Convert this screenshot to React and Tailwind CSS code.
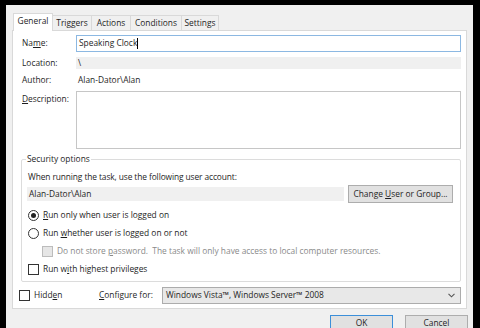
import React from "react";

const tabs = [
  { label: "General", w: "w-[40px]", active: true },
  { label: "Triggers", w: "w-[40px]" },
  { label: "Actions", w: "w-[40px]" },
  { label: "Conditions", w: "w-[52px]" },
  { label: "Settings", w: "w-[38px]" },
];

function Radio({ checked, children }) {
  return (
    <div className="flex items-center h-[18px]">
      <div className="w-[11px] h-[11px] rounded-full border border-[#333] bg-white flex items-center justify-center">
        {checked && <div className="w-[5px] h-[5px] rounded-full bg-[#222]" />}
      </div>
      <span className="ml-[4px]">{children}</span>
    </div>
  );
}

function Check({ disabled, children }) {
  return (
    <div className="flex items-center h-[18px]">
      <div
        className={
          disabled
            ? "w-[11px] h-[11px] border border-[#bcbcbc] bg-[#e6e6e6]"
            : "w-[11px] h-[11px] border border-[#333] bg-white"
        }
      />
      <span className={disabled ? "ml-[4px] text-[#8a8a8a]" : "ml-[4px]"}>{children}</span>
    </div>
  );
}

export default function App() {
  return (
    <div
      className="w-[480px] h-[328px] bg-black pt-[5px] pl-[6px] overflow-hidden text-[8.4px] text-[#1e1e1e] leading-none"
      style={{ fontFamily: '"Open Sans", "Noto Sans", sans-serif' }}
    >
      <div className="w-[467px] h-[330px] bg-[#f0f0f0] pt-[8px] pl-[6px]">
        {/* Tabs */}
        <div className="flex items-end h-[17px] ml-[1px]">
          {tabs.map((t) =>
            t.active ? (
              <div
                key={t.label}
                className={`${t.w} h-[18px] -mb-[1px] relative z-10 bg-white border border-b-0 border-[#d9d9d9] flex items-center justify-center pb-[2px]`}
              >
                {t.label}
              </div>
            ) : (
              <div
                key={t.label}
                className={`${t.w} h-[15px] -ml-[1px] bg-[#f0f0f0] border border-b-0 border-[#d9d9d9] flex items-center justify-center`}
              >
                {t.label}
              </div>
            )
          )}
        </div>

        {/* Panel */}
        <div className="w-[455px] h-[279px] border border-[#d9d9d9] bg-white pt-[4px] pl-[9px] pr-[5px]">
          <div className="flex items-center h-[17px]">
            <span className="w-[54px]">
              Na<u className="underline-offset-1">m</u>e:
            </span>
            <div className="flex-1 h-[17px] border border-[#8cb8e2] flex items-center pl-[2px]">
              Speaking Clock<span className="w-px h-[11px] bg-black" />
            </div>
          </div>

          <div className="flex items-center h-[12px] mt-[5px]">
            <span className="w-[54px]">Location:</span>
            <div className="flex-1 h-[12px] bg-[#f0f0f0] flex items-center pl-[2px]">\</div>
          </div>

          <div className="flex items-center h-[12px] mt-[5px]">
            <span className="w-[54px]">Author:</span>
            <span className="pl-[2px]">Alan-Dator\Alan</span>
          </div>

          <div className="flex mt-[5px]">
            <span className="w-[54px] pt-[4px]">
              <u className="underline-offset-1">D</u>escription:
            </span>
            <div className="flex-1 h-[58px] border border-[#c6c6c6]" />
          </div>

          {/* Security options */}
          <fieldset className="ml-[-1px] mt-[4px] h-[129px] border border-[#dcdcdc] rounded-[2px] pl-[5px] pr-[7px]">
            <legend className="px-[1px] ml-[-1px] h-[13px] flex items-center">Security options</legend>
            <div className="h-[12px] flex items-center mt-[5px] ml-[1px] tracking-[-0.1px]">
              When running the task, use the following user account:
            </div>
            <div className="flex items-center mt-[2px] h-[18px]">
              <div className="w-[317px] h-[14px] bg-[#f0f0f0] flex items-center pl-[2px]">Alan-Dator\Alan</div>
              <div className="ml-auto w-[105px] h-[18px] border border-[#adadad] bg-[#e1e1e1] flex items-center justify-center">
                Change&nbsp;<u className="underline-offset-1">U</u>ser or Group...
              </div>
            </div>
            <div className="mt-[3px] ml-[1px]">
              <Radio checked>
                <u className="underline-offset-1">R</u>un only when user is logged on
              </Radio>
              <Radio>
                Run <u className="underline-offset-1">w</u>hether user is logged on or not
              </Radio>
              <div className="ml-[14px]">
                <Check disabled>
                  Do not store <u className="underline-offset-1">p</u>assword.&nbsp; The task will only have access to local computer resources.
                </Check>
              </div>
              <Check>
                Run w<u className="underline-offset-1">i</u>th highest privileges
              </Check>
            </div>
          </fieldset>

          {/* Bottom row */}
          <div className="flex items-center h-[17px] mt-[5px] ml-[-3px]">
            <div className="w-[80px]">
              <Check>
                Hidd<u className="underline-offset-1">e</u>n
              </Check>
            </div>
            <span className="w-[63px]">
              <u className="underline-offset-1">C</u>onfigure for:
            </span>
            <div className="flex-1 h-[17px] border border-[#acacac] bg-[#e8e8e8] flex items-center pl-[3px] pr-[5px]">
              <span>Windows Vista™, Windows Server™ 2008</span>
              <svg className="ml-auto" width="7" height="5" viewBox="0 0 7 5">
                <polyline points="0.5,0.8 3.5,3.8 6.5,0.8" fill="none" stroke="#555" strokeWidth="1.1" />
              </svg>
            </div>
          </div>
        </div>

        {/* Buttons */}
        <div className="flex justify-end gap-[12px] mt-[6px] pr-[5px]">
          <div className="w-[63px] h-[17px] border border-[#3c8fd9] bg-[#e1e1e1] flex items-center justify-center">
            OK
          </div>
          <div className="w-[63px] h-[17px] border border-[#adadad] bg-[#e1e1e1] flex items-center justify-center">
            Cancel
          </div>
        </div>
      </div>
    </div>
  );
}
